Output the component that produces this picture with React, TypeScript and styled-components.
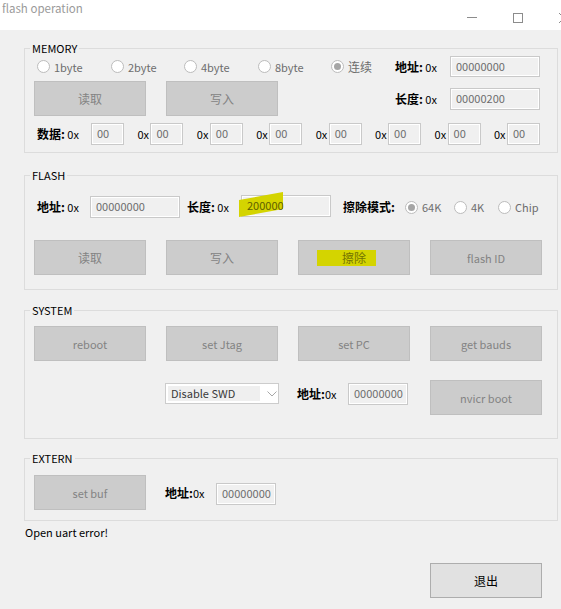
import React from "react";
import styled, { createGlobalStyle } from "styled-components";

const GlobalStyle = createGlobalStyle`
  html, body {
    margin: 0;
    padding: 0;
    background: #f0f0f0;
    overflow: hidden;
  }
  body {
    font-family: "Noto Sans CJK SC", "Noto Sans", sans-serif;
    font-size: 11px;
    color: #000;
  }
  * { box-sizing: border-box; }
`;

const Window = styled.div`
  width: 561px;
  height: 609px;
  overflow: hidden;
  background: #f0f0f0;
`;

const TitleBar = styled.div`
  height: 30px;
  background: #ffffff;
  display: flex;
  overflow: hidden;
`;

const Title = styled.div`
  flex: 1;
  padding: 1px 0 0 2px;
  font-size: 11.5px;
  line-height: 14px;
  color: #9a9a9a;
`;

const Controls = styled.div`
  display: flex;
  flex-shrink: 0;
  margin-right: -26px;
`;

const CtrlButton = styled.div`
  width: 46px;
  height: 30px;
  padding-top: 5px;
  display: flex;
  align-items: center;
  justify-content: center;
`;

const Body = styled.div`
  padding: 11px 3px 0 24px;
`;

const Group = styled.fieldset<{ $mt?: number }>`
  margin: ${(p) => p.$mt ?? 0}px 0 0 0;
  padding: 0;
  min-width: 0;
  border: 1px solid #dcdcdc;
`;

const Legend = styled.legend`
  margin-left: 5px;
  padding: 0 2px;
  line-height: 14px;
  color: #000;
`;

const Inner = styled.div<{ $top: number; $bottom: number }>`
  padding: ${(p) => p.$top}px 15px ${(p) => p.$bottom}px 9px;
`;

const Row = styled.div<{ $mt?: number; $h: number }>`
  display: flex;
  align-items: center;
  height: ${(p) => p.$h}px;
  margin-top: ${(p) => p.$mt ?? 0}px;
`;

const RadioSet = styled.div`
  display: flex;
  align-items: center;
  padding-left: 3px;
`;

const Spacer = styled.div`
  flex: 1;
`;

const RadioItem = styled.label<{ $w?: number }>`
  display: flex;
  align-items: center;
  gap: 4px;
  flex-shrink: 0;
  width: ${(p) => (p.$w ? `${p.$w}px` : "auto")};
  line-height: 14px;
  color: #6d6d6d;
`;

const RadioDot = styled.span<{ $on?: boolean }>`
  width: 13px;
  height: 13px;
  flex-shrink: 0;
  border-radius: 50%;
  border: 1px solid #bcbcbc;
  background: #ffffff;
  display: flex;
  align-items: center;
  justify-content: center;

  &::after {
    content: "";
    display: ${(p) => (p.$on ? "block" : "none")};
    width: 7px;
    height: 7px;
    border-radius: 50%;
    background: #a6a6a6;
  }
`;

const FieldLabel = styled.span<{ $w: number; $ml?: number }>`
  width: ${(p) => p.$w}px;
  margin-left: ${(p) => p.$ml ?? 0}px;
  flex-shrink: 0;
  white-space: nowrap;
  line-height: 14px;
`;

/* bold chinese caption in front of "0x" */
const Han = styled.span`
  font-size: 12px;
  font-weight: 700;
`;

/* chinese text elsewhere (buttons, radio) is drawn a bit larger than latin */
const Zh = styled.span`
  font-size: 12px;
`;

const Field = styled.div<{ $w: number; $h?: number; $mr?: number }>`
  position: relative;
  width: ${(p) => p.$w}px;
  height: ${(p) => p.$h ?? 22}px;
  margin-right: ${(p) => p.$mr ?? 0}px;
  flex-shrink: 0;
  display: flex;
  align-items: center;
  padding: 0 0 2px 5px;
  border: 1px solid #c9c9c9;
  box-shadow: inset 0 0 0 1px #ffffff;
  background: #f0f0f0;
  color: #6d6d6d;
  line-height: 14px;
  white-space: nowrap;
`;

const DataRow = styled.div`
  display: flex;
  align-items: center;
  justify-content: space-between;
  height: 22px;
  margin-top: 7px;
  padding: 0 2px 0 3px;
`;

const DataCell = styled.div`
  display: flex;
  align-items: center;
`;

const Button = styled.button`
  position: relative;
  width: 112px;
  height: 35px;
  flex-shrink: 0;
  padding: 0;
  font: inherit;
  border: 1px solid #bfbfbf;
  background: #cccccc;
  color: #838383;
`;

const ExitButton = styled(Button)`
  background: #e1e1e1;
  border-color: #adadad;
  color: #000;
`;

const ButtonGrid = styled.div<{ $mt: number }>`
  display: grid;
  grid-template-columns: repeat(4, 112px);
  column-gap: 20px;
  row-gap: 19px;
  margin-top: ${(p) => p.$mt}px;
`;

const Combo = styled.div`
  align-self: start;
  margin: 3px 0 0 -1px;
  width: 114px;
  height: 21px;
  padding: 2px 1px 2px 2px;
  border: 1px solid #cccccc;
  background: #ffffff;
  display: flex;
  align-items: center;
`;

const ComboValue = styled.span`
  width: 92px;
  height: 15px;
  padding-left: 3px;
  background: #efefef;
  color: #3a3a3a;
  line-height: 15px;
  white-space: nowrap;
`;

const Chevron = styled.svg`
  margin-left: auto;
`;

const AddrCell = styled.div`
  align-self: start;
  margin: 3px 0 0 -1px;
  display: flex;
  align-items: center;
  height: 22px;
`;

const Marker = styled.span<{ $l: number; $t: number; $w: number; $h: number; $skew?: number }>`
  position: absolute;
  left: ${(p) => p.$l}px;
  top: ${(p) => p.$t}px;
  width: ${(p) => p.$w}px;
  height: ${(p) => p.$h}px;
  background: #d4d400;
  transform: skewY(${(p) => p.$skew ?? 0}deg);
`;

const Marked = styled.span<{ $c: string }>`
  position: relative;
  z-index: 1;
  color: ${(p) => p.$c};
`;

const Status = styled.div`
  margin: 4px 0 0 1px;
  line-height: 14px;
`;

const ExitRow = styled.div`
  display: flex;
  justify-content: flex-end;
  margin: 24px 16px 0 0;
`;

const Radio = ({ label, w, on }: { label: React.ReactNode; w?: number; on?: boolean }) => (
  <RadioItem $w={w}>
    <RadioDot $on={on} />
    {label}
  </RadioItem>
);

const dataCells = [1, 2, 3, 4, 5, 6, 7];

export default function App() {
  return (
    <>
      <GlobalStyle />
      <Window>
        <TitleBar>
          <Title>flash operation</Title>
          <Controls>
            <CtrlButton>
              <svg width="10" height="10" viewBox="0 0 10 10">
                <line x1="0" y1="4.5" x2="10" y2="4.5" stroke="#8c8c8c" strokeWidth="1" />
              </svg>
            </CtrlButton>
            <CtrlButton>
              <svg width="10" height="10" viewBox="0 0 10 10">
                <rect x="0.5" y="0.5" width="9" height="9" fill="none" stroke="#8c8c8c" strokeWidth="1" />
              </svg>
            </CtrlButton>
            <CtrlButton>
              <svg width="10" height="10" viewBox="0 0 10 10">
                <path d="M0 0 L10 10 M10 0 L0 10" stroke="#8c8c8c" strokeWidth="1" />
              </svg>
            </CtrlButton>
          </Controls>
        </TitleBar>

        <Body>
          <Group>
            <Legend>MEMORY</Legend>
            <Inner $top={1} $bottom={7}>
              <Row $h={21}>
                <RadioSet>
                  <Radio label="1byte" w={74} />
                  <Radio label="2byte" w={73} />
                  <Radio label="4byte" w={74} />
                  <Radio label="8byte" w={73} />
                  <Radio label={<Zh>连续</Zh>} on />
                </RadioSet>
                <Spacer />
                <FieldLabel $w={55}>
                  <Han>地址:</Han> 0x
                </FieldLabel>
                <Field $w={90} $h={21} $mr={2}>00000000</Field>
              </Row>
              <Row $h={35} $mt={4}>
                <Button><Zh>读取</Zh></Button>
                <Button style={{ marginLeft: 20 }}><Zh>写入</Zh></Button>
                <Spacer />
                <FieldLabel $w={55}>
                  <Han>长度:</Han> 0x
                </FieldLabel>
                <Field $w={90} $mr={2}>00000200</Field>
              </Row>
              <DataRow>
                <DataCell>
                  <FieldLabel $w={54}>
                    <Han>数据:</Han> 0x
                  </FieldLabel>
                  <Field $w={33}>00</Field>
                </DataCell>
                {dataCells.map((n) => (
                  <DataCell key={n}>
                    <FieldLabel $w={13}>0x</FieldLabel>
                    <Field $w={33}>00</Field>
                  </DataCell>
                ))}
              </DataRow>
            </Inner>
          </Group>

          <Group $mt={15}>
            <Legend>FLASH</Legend>
            <Inner $top={0} $bottom={14}>
              <Row $h={22} $mt={14} style={{ paddingLeft: 3 }}>
                <FieldLabel $w={53}>
                  <Han>地址:</Han> 0x
                </FieldLabel>
                <Field $w={90}>00000000</Field>
                <FieldLabel $w={54} $ml={7}>
                  <Han>长度:</Han> 0x
                </FieldLabel>
                <Field $w={90} style={{ marginTop: -2 }}>
                  <Marker $l={-3} $t={0} $w={44} $h={17} $skew={-10} />
                  <Marked $c="#5f5f00">200000</Marked>
                </Field>
                <FieldLabel $w={62} $ml={12}>
                  <Han>擦除模式:</Han>
                </FieldLabel>
                <Radio label="64K" w={49} on />
                <Radio label="4K" w={44} />
                <Radio label="Chip" />
              </Row>
              <ButtonGrid $mt={22}>
                <Button><Zh>读取</Zh></Button>
                <Button><Zh>写入</Zh></Button>
                <Button>
                  <Marker $l={18} $t={9} $w={59} $h={16} />
                  <Marked $c="#737300"><Zh>擦除</Zh></Marked>
                </Button>
                <Button>flash ID</Button>
              </ButtonGrid>
            </Inner>
          </Group>

          <Group $mt={13}>
            <Legend>SYSTEM</Legend>
            <Inner $top={0} $bottom={23}>
              <ButtonGrid $mt={9}>
                <Button>reboot</Button>
                <Button>set Jtag</Button>
                <Button>set PC</Button>
                <Button>get bauds</Button>
                <div />
                <Combo>
                  <ComboValue>Disable SWD</ComboValue>
                  <Chevron width="10" height="6" viewBox="0 0 10 6">
                    <polyline points="0.5,0.5 5,5 9.5,0.5" fill="none" stroke="#a8a8a8" strokeWidth="1" />
                  </Chevron>
                </Combo>
                <AddrCell>
                  <FieldLabel $w={51}>
                    <Han>地址:</Han>0x
                  </FieldLabel>
                  <Field $w={60}>00000000</Field>
                </AddrCell>
                <Button>nvicr boot</Button>
              </ButtonGrid>
            </Inner>
          </Group>

          <Group $mt={12}>
            <Legend>EXTERN</Legend>
            <Inner $top={10} $bottom={10}>
              <Row $h={35}>
                <Button>set buf</Button>
                <FieldLabel $w={51} $ml={19}>
                  <Han>地址:</Han>0x
                </FieldLabel>
                <Field $w={60} style={{ marginTop: 3 }}>00000000</Field>
              </Row>
            </Inner>
          </Group>

          <Status>Open uart error!</Status>
          <ExitRow>
            <ExitButton><Zh>退出</Zh></ExitButton>
          </ExitRow>
        </Body>
      </Window>
    </>
  );
}
